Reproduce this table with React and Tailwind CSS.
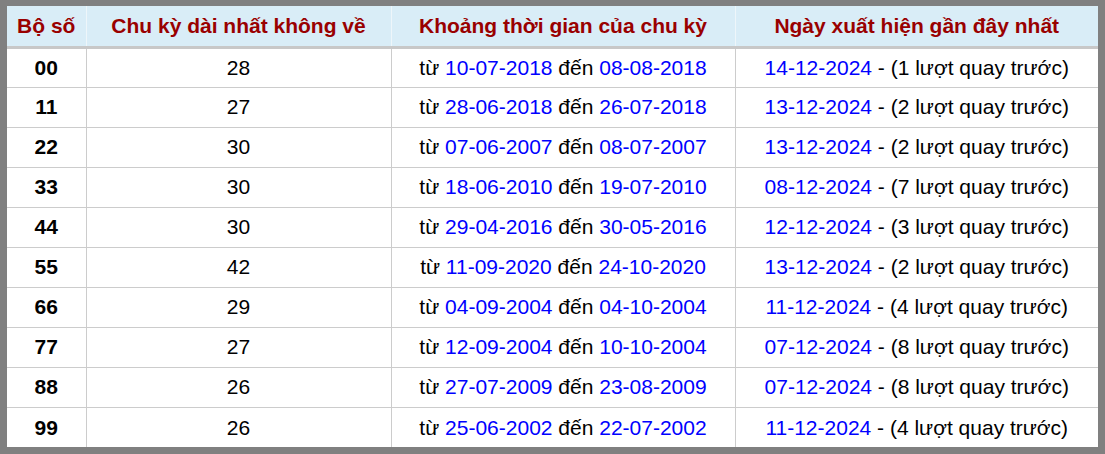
const rows = [
  ["00", "28", "10-07-2018", "08-08-2018", "14-12-2024", 1],
  ["11", "27", "28-06-2018", "26-07-2018", "13-12-2024", 2],
  ["22", "30", "07-06-2007", "08-07-2007", "13-12-2024", 2],
  ["33", "30", "18-06-2010", "19-07-2010", "08-12-2024", 7],
  ["44", "30", "29-04-2016", "30-05-2016", "12-12-2024", 3],
  ["55", "42", "11-09-2020", "24-10-2020", "13-12-2024", 2],
  ["66", "29", "04-09-2004", "04-10-2004", "11-12-2024", 4],
  ["77", "27", "12-09-2004", "10-10-2004", "07-12-2024", 8],
  ["88", "26", "27-07-2009", "23-08-2009", "07-12-2024", 8],
  ["99", "26", "25-06-2002", "22-07-2002", "11-12-2024", 4],
];

export default function App() {
  return (
    <div
      className="w-[1105px] h-[454px] bg-[#808080] pt-[6px] pl-[7px] pr-[7px] pb-[7px]"
      style={{ fontFamily: '"Liberation Sans", Arial, sans-serif' }}
    >
      <table className="w-[1091px] border-collapse bg-white table-fixed text-[21px] text-black">
        <colgroup>
          <col className="w-[79px]" />
          <col className="w-[305px]" />
          <col className="w-[344px]" />
          <col className="w-[363px]" />
        </colgroup>
        <thead>
          <tr className="h-[41px] bg-[#d9edf7] text-[#990000] font-bold border-b-[3px] border-[#c8c8c8]">
            <th className="border-r border-[#eef6fa] font-bold">Bộ số</th>
            <th className="border-r border-[#eef6fa] font-bold">Chu kỳ dài nhất không về</th>
            <th className="border-r border-[#eef6fa] font-bold">Khoảng thời gian của chu kỳ</th>
            <th className="font-bold">Ngày xuất hiện gần đây nhất</th>
          </tr>
        </thead>
        <tbody>
          {rows.map((r, i) => (
            <tr
              key={r[0]}
              className={i < rows.length - 1 ? "h-[40px] border-b border-[#cccccc]" : "h-[40px]"}
            >
              <td className="text-center font-bold border-r border-[#cccccc]">{r[0]}</td>
              <td className="text-center border-r border-[#cccccc]">{r[1]}</td>
              <td className="text-center border-r border-[#cccccc]">
                từ <span className="text-[#0000ff]">{r[2]}</span> đến{" "}
                <span className="text-[#0000ff]">{r[3]}</span>
              </td>
              <td className="text-center">
                <span className="text-[#0000ff]">{r[4]}</span> - ({r[5]} lượt quay trước)
              </td>
            </tr>
          ))}
        </tbody>
      </table>
    </div>
  );
}
